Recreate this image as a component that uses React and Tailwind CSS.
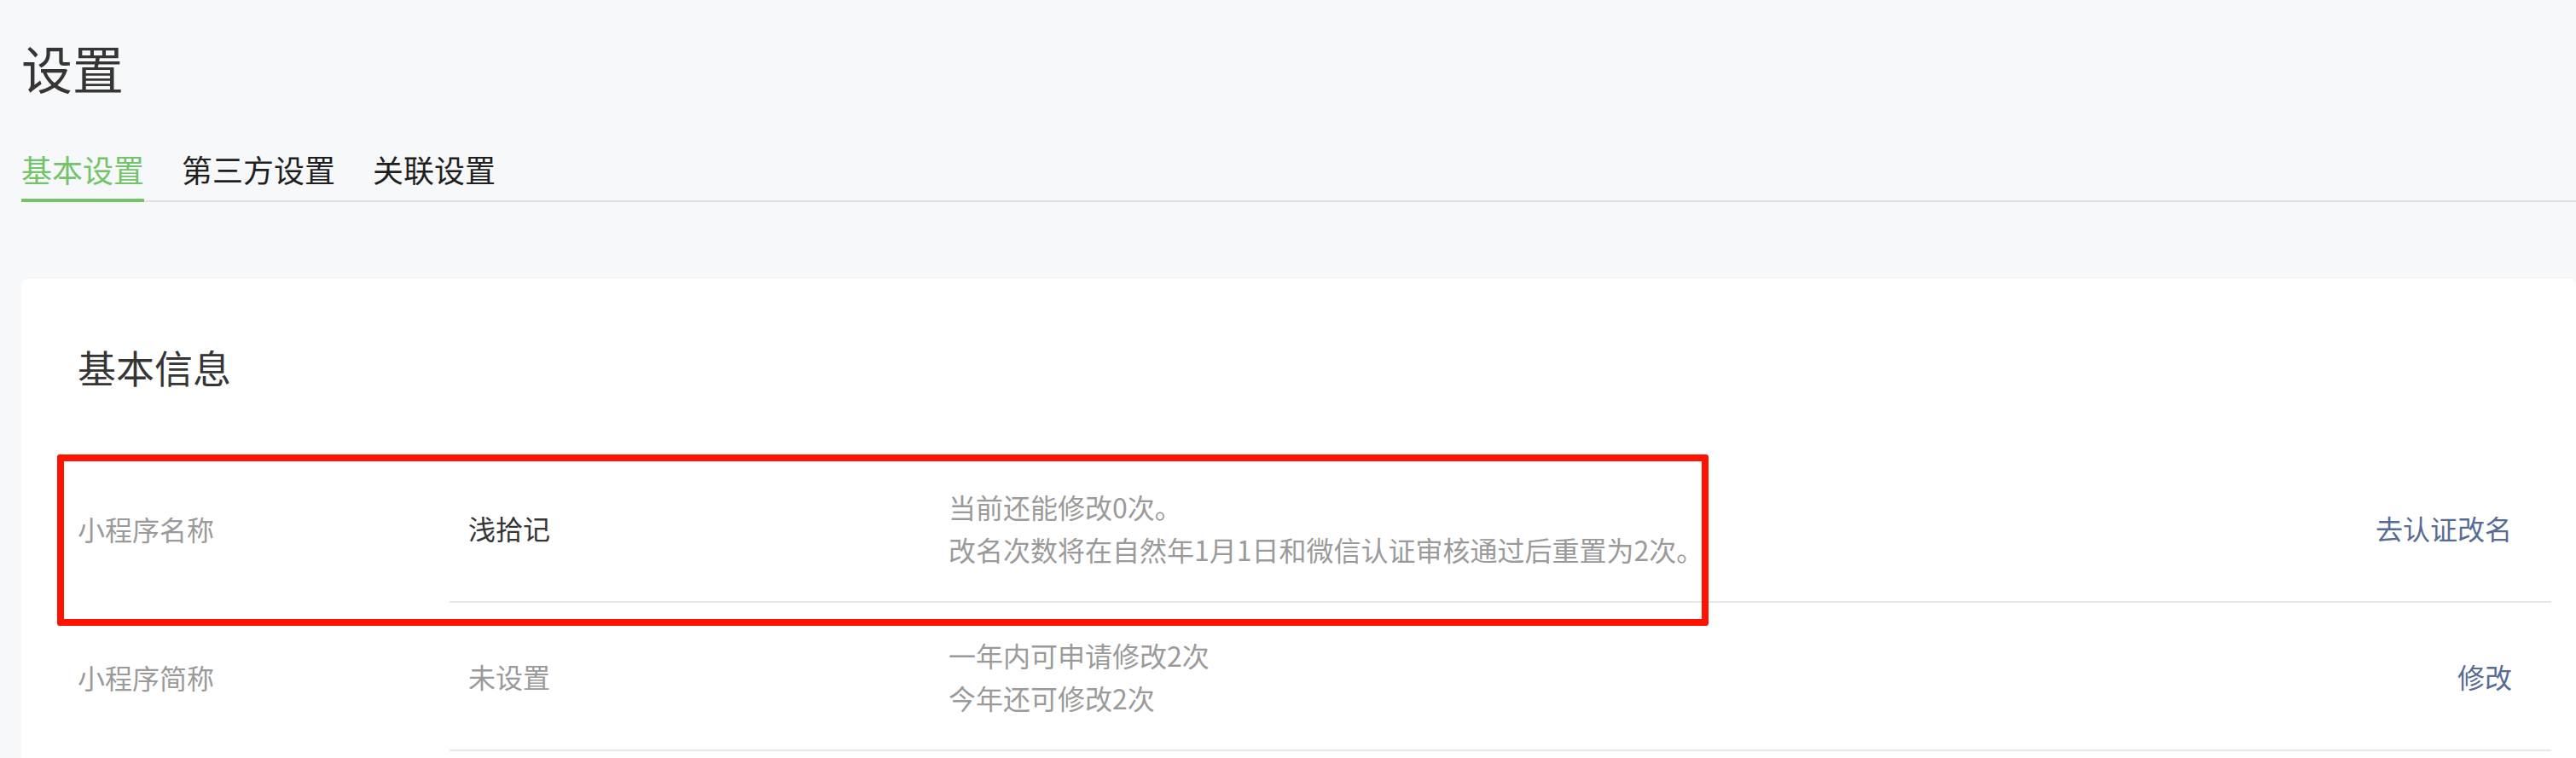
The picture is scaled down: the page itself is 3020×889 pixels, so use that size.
import React from "react";

const rows = [
  {
    label: "小程序名称",
    value: "浅拾记",
    valueSet: true,
    desc: ["当前还能修改0次。", "改名次数将在自然年1月1日和微信认证审核通过后重置为2次。"],
    action: "去认证改名",
  },
  {
    label: "小程序简称",
    value: "未设置",
    valueSet: false,
    desc: ["一年内可申请修改2次", "今年还可修改2次"],
    action: "修改",
  },
];

const tabs = ["基本设置", "第三方设置", "关联设置"];

// faint repeated watermark laid over the whole page
function Watermark() {
  const lines = Array.from({ length: 9 });
  const cols = Array.from({ length: 8 });
  return (
    <div className="pointer-events-none absolute inset-0 z-20 overflow-hidden">
      <div className="absolute left-[-92px] top-[4px] flex flex-col">
        {lines.map((_, i) => (
          <div key={i} className="flex h-[103.5px]">
            {cols.map((_, j) => (
              <span
                key={j}
                className="w-[485px] shrink-0 font-['Liberation_Sans',sans-serif] text-[32px] leading-[42px] text-black/[0.018]"
              >
                Xa89ea4AGPW
              </span>
            ))}
          </div>
        ))}
      </div>
    </div>
  );
}

function InfoRow({ row }) {
  return (
    <div className="flex items-center">
      <div className="w-[436px] shrink-0 text-[32px] text-[#9a9a9a]">{row.label}</div>
      <div className="flex flex-1 items-center border-b-2 border-[#e6e6ec] py-[36px] pr-[46px]">
        <div
          className={
            "w-[585px] shrink-0 pl-[22px] text-[32px] " +
            (row.valueSet ? "text-[#353535]" : "text-[#9a9a9a]")
          }
        >
          {row.value}
        </div>
        <div className="flex-1 text-[32px] leading-[50px] text-[#9a9a9a]">
          {row.desc.map((d) => (
            <div key={d}>{d}</div>
          ))}
        </div>
        <a className="cursor-pointer text-[32px] text-[#576b95]">{row.action}</a>
      </div>
    </div>
  );
}

export default function App() {
  return (
    <div className="relative min-h-[889px] overflow-hidden bg-[#f7f8fa] pl-[25px] font-['Noto_Sans_CJK_SC','Noto_Sans',sans-serif]">
      <h1 className="pt-[39px] text-[60px] leading-[80px] font-normal text-[#353535]">设置</h1>

      <div className="mt-[54px] flex gap-[44px] border-b-2 border-[#e0e0e0]">
        {tabs.map((t, i) => (
          <div
            key={t}
            className={
              i === 0
                ? "-mb-[2px] border-b-4 border-[#74c36a] pb-[10px] text-[36px] leading-[50px] text-[#74c36a]"
                : "pb-[10px] text-[36px] leading-[50px] text-[#1f1f1f]"
            }
          >
            {t}
          </div>
        ))}
      </div>

      <div className="mt-[90px] min-h-[600px] rounded-[8px] bg-white pl-[66px] pr-[29px] pt-[72px]">
        <h2 className="text-[45px] leading-[64px] font-normal text-[#353535]">基本信息</h2>
        <div className="mt-[70px]">
          {rows.map((r) => (
            <InfoRow key={r.label} row={r} />
          ))}
        </div>
      </div>

      {/* annotation box */}
      <div className="pointer-events-none absolute left-[67px] top-[533px] z-10 h-[201px] w-[1936px] rounded-[3px] border-[8px] border-[#ff1200]" />

      <Watermark />
    </div>
  );
}
